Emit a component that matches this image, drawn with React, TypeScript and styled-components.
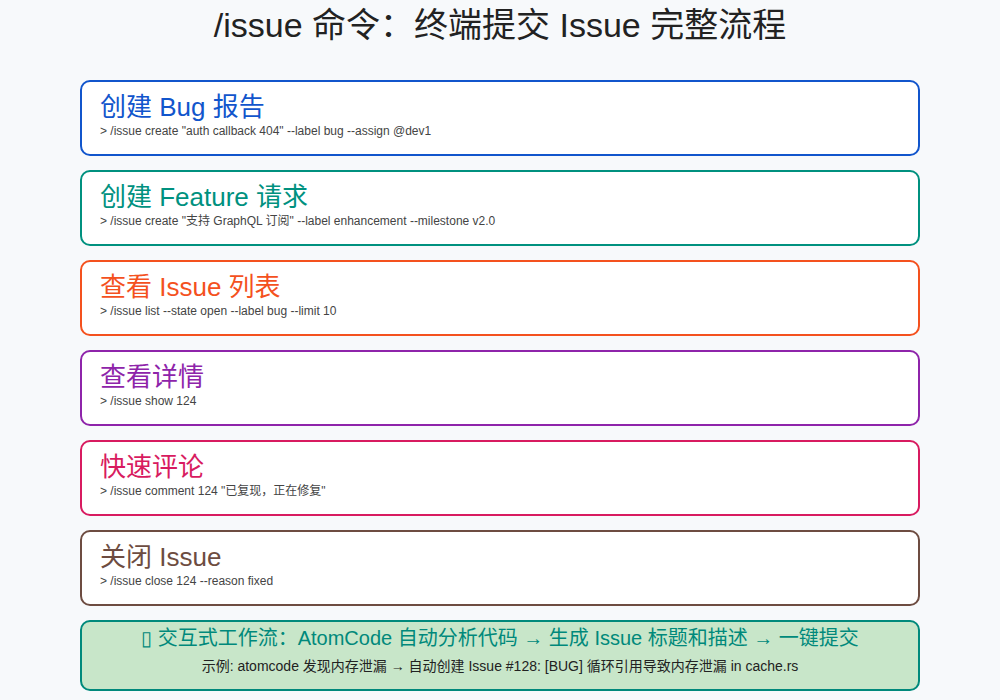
import React from "react";
import styled, { createGlobalStyle } from "styled-components";

const Global = createGlobalStyle`
  body {
    margin: 0;
    background: #f7f9fb;
    font-family: "DejaVu Sans", "Noto Sans CJK SC", sans-serif;
  }
`;

const Page = styled.div`
  width: 1000px;
  height: 700px;
  display: flex;
  flex-direction: column;
  align-items: center;
  overflow: hidden;
`;

const Title = styled.h1`
  margin: 4px 0 0;
  height: 76px;
  font-weight: normal;
  font-size: 34px;
  line-height: 42px;
  color: #222;
  font-family: "Liberation Sans", "Noto Sans CJK SC", sans-serif;
`;

const List = styled.div`
  width: 840px;
  display: flex;
  flex-direction: column;
  gap: 14px;
`;

const Card = styled.div<{ $color: string }>`
  box-sizing: border-box;
  height: 76px;
  border: 2px solid ${(p) => p.$color};
  border-radius: 10px;
  background: #fff;
  padding: 8px 18px;
  display: flex;
  flex-direction: column;
`;

const CardTitle = styled.div<{ $color: string }>`
  color: ${(p) => p.$color};
  font-size: 26px;
  line-height: 34px;
  font-family: "Liberation Sans", "Noto Sans CJK SC", sans-serif;
`;

const Cmd = styled.div`
  color: #444;
  font-size: 12px;
  line-height: 14px;
  font-family: "Liberation Sans", "Noto Sans CJK SC", sans-serif;
`;

const Footer = styled.div`
  box-sizing: border-box;
  height: 71px;
  border: 2px solid #00897b;
  border-radius: 10px;
  background: #c8e6c9;
  display: flex;
  flex-direction: column;
  align-items: center;
  padding-top: 2px;
  font-family: "Liberation Sans", "Noto Sans CJK SC", sans-serif;
`;

const FooterHead = styled.div`
  color: #00897b;
  font-size: 20px;
  line-height: 28px;
`;

const FooterNote = styled.div`
  color: #222;
  font-size: 14px;
  line-height: 28px;
`;

const items = [
  { color: "#1155cc", title: "创建 Bug 报告", cmd: '> /issue create "auth callback 404" --label bug --assign @dev1' },
  { color: "#00917f", title: "创建 Feature 请求", cmd: '> /issue create "支持 GraphQL 订阅" --label enhancement --milestone v2.0' },
  { color: "#f4511e", title: "查看 Issue 列表", cmd: "> /issue list --state open --label bug --limit 10" },
  { color: "#8e24aa", title: "查看详情", cmd: "> /issue show 124" },
  { color: "#d81b60", title: "快速评论", cmd: '> /issue comment 124 "已复现，正在修复"' },
  { color: "#6d4c41", title: "关闭 Issue", cmd: "> /issue close 124 --reason fixed" },
];

export default function App() {
  return (
    <Page>
      <Global />
      <Title>/issue 命令：终端提交 Issue 完整流程</Title>
      <List>
        {items.map((it) => (
          <Card key={it.title} $color={it.color}>
            <CardTitle $color={it.color}>{it.title}</CardTitle>
            <Cmd>{it.cmd}</Cmd>
          </Card>
        ))}
        <Footer>
          <FooterHead>▯ 交互式工作流：AtomCode 自动分析代码 → 生成 Issue 标题和描述 → 一键提交</FooterHead>
          <FooterNote>示例: atomcode 发现内存泄漏 → 自动创建 Issue #128: [BUG] 循环引用导致内存泄漏 in cache.rs</FooterNote>
        </Footer>
      </List>
    </Page>
  );
}
